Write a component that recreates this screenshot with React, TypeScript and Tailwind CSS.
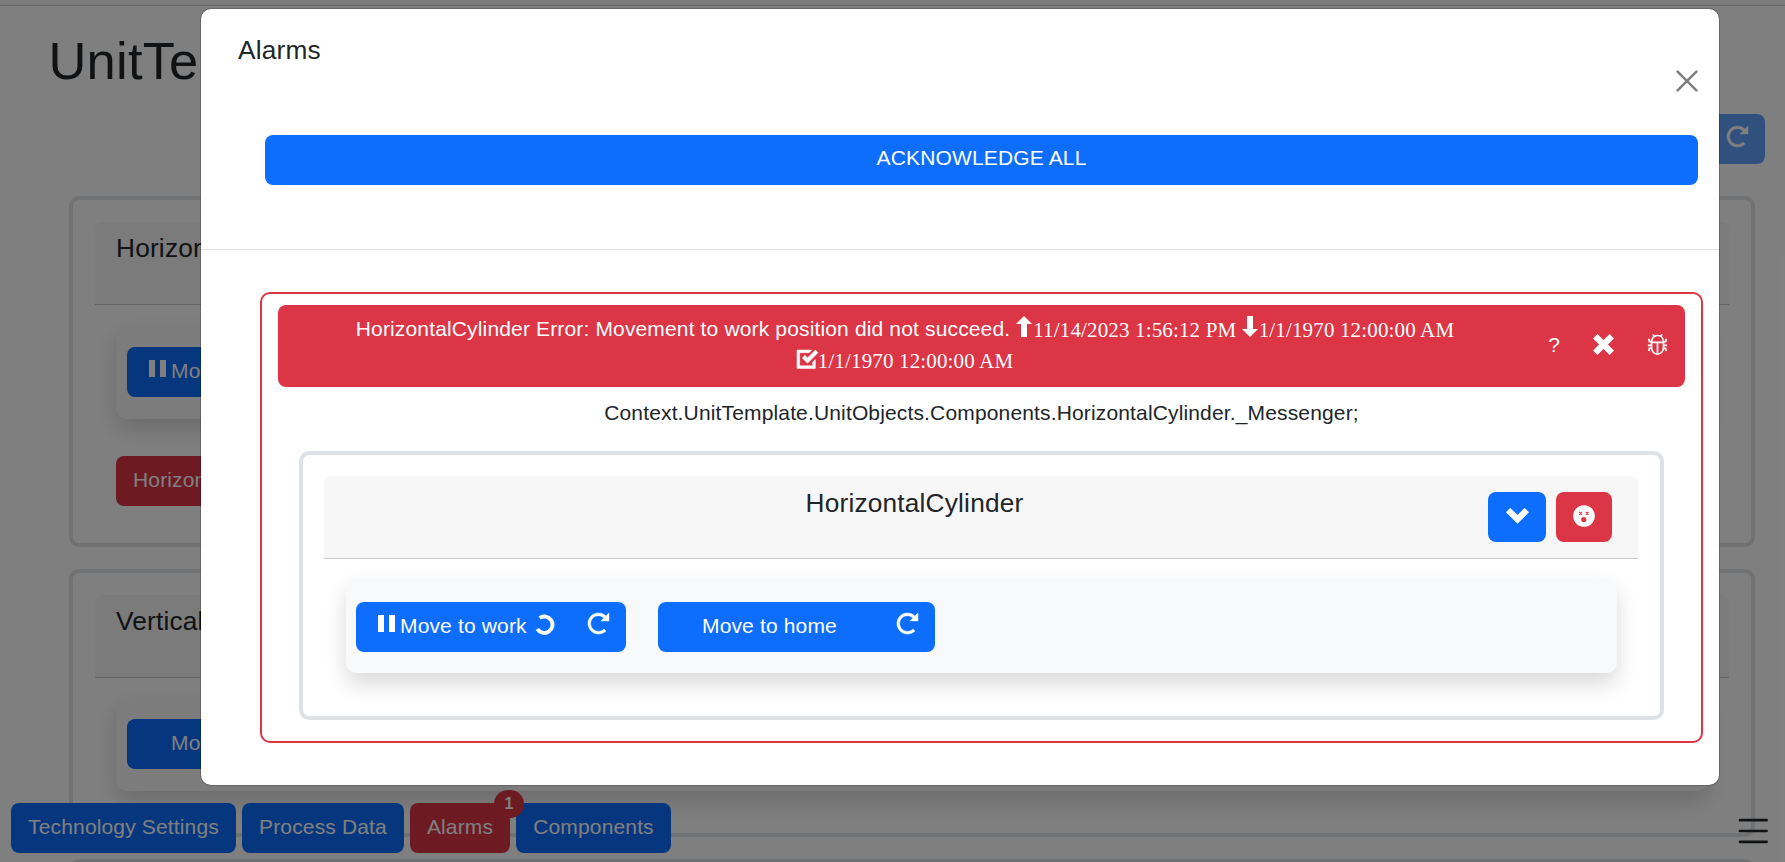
import type { ReactNode } from "react";

type IconProps = { className?: string };

/* Solid glyphs, drawn on an 8x8 grid */
function Glyph({ d, className = "", t, bold = 0 }: { d: string; className?: string; t?: string; bold?: number }) {
  return (
    <svg viewBox="0 0 8 8" fill="currentColor" stroke="currentColor" strokeWidth={bold} className={`inline-block h-[21px] w-[21px] shrink-0 overflow-visible ${className}`}>
      <path d={d} transform={t} />
    </svg>
  );
}
const Reload = ({ className }: IconProps) => (
  <Glyph
    className={className}
    bold={0.2}
    d="M4 0c-2.2 0-4 1.8-4 4s1.8 4 4 4c1.1 0 2.12-.43 2.84-1.16l-.72-.72c-.54.54-1.29.88-2.13.88-1.66 0-3-1.34-3-3s1.34-3 3-3c.83 0 1.55.36 2.09.91l-1.09 1.09h3v-3l-1.19 1.19c-.72-.72-1.71-1.19-2.81-1.19z"
  />
);
const Pause = () => (
  <svg viewBox="0 0 17 17" fill="currentColor" className="-mt-[5px] h-[17px] w-[17px] shrink-0">
    <path d="M0 0h6v17H0zM11 0h6v17h-6z" />
  </svg>
);
const Spin = ({ className }: IconProps) => (
  <svg viewBox="0 0 20 21" fill="none" stroke="currentColor" strokeWidth="3.900" className={`h-[21px] w-[20px] shrink-0 ${className}`}>
    <path d="M4.600 4A8.200 8.200 0 1 1 2.300 15" />
  </svg>
);
const Up = ({ className = "" }: IconProps) => (
  <svg viewBox="0 0 16 21" fill="currentColor" className={`h-[21px] w-[16px] shrink-0 ${className}`}>
    <path d="M8 0l8 8h-5v13H5V8H0z" />
  </svg>
);
const Down = ({ className = "" }: IconProps) => (
  <svg viewBox="0 0 16 21" fill="currentColor" className={`h-[21px] w-[16px] shrink-0 ${className}`}>
    <path d="M8 21l8-8h-5V0H5v13H0z" />
  </svg>
);
const Check = ({ className }: IconProps) => (
  <Glyph
    className={className}
    bold={0.2}
    d="M0 0v7h7v-3.410l-1 1v1.410h-5v-5h3.590l1-1h-5.590zm7 0l-3 3-1-1-1 1 2 2 4-4-1-1z"
    t="translate(0 .4)"
  />
);
const Cross = ({ className = "" }: IconProps) => (
  <svg viewBox="0 0 21 21" stroke="currentColor" strokeWidth="6.2" className={`h-[21px] w-[21px] shrink-0 ${className}`}>
    <path d="M2.200 2.200l16.600 16.600M18.800 2.200L2.200 18.800" />
  </svg>
);
const Chevron = ({ className }: IconProps) => (
  <Glyph className={className} d="M1.500 0l-1.500 1.500 4 4 4-4-1.500-1.500-2.500 2.500-2.500-2.500z" t="translate(0 1)" />
);
const Bug = () => (
  <svg viewBox="0 0 21 21" fill="none" stroke="currentColor" strokeWidth="1.700" className="h-[21px] w-[21px]">
    <path d="M4.500 8.300h12v5.500a6 6.300 0 0 1-12 0zM4.500 8.300c0-3.800 2.200-6.800 6-6.800s6 3 6 6.800M10.500 8.300V20M7.300 2.600 6 .3M13.700 2.600 15 .3M4.500 7.700H2.400L1.700 4.800M16.500 7.700h2.100l.7-2.900M4.500 11.300H.900M16.500 11.300h3.600M4.500 14.400H2.400L1.700 17M16.500 14.400h2.100l.7 2.600" />
  </svg>
);
const Dizzy = () => (
  <svg viewBox="0 0 22 22" className="h-[22px] w-[22px]">
    <circle cx="11" cy="11" r="10.800" fill="#fff" />
    <path d="M6.100 7l2.800 2.800M8.900 7 6.100 9.800M12.700 7l2.800 2.800M15.500 7l-2.800 2.800" stroke="#dc3545" strokeWidth="1.100" />
    <ellipse cx="10.800" cy="14.600" rx="2.600" ry="2.700" fill="#dc3545" />
  </svg>
);

function Btn({ children, className = "" }: { children?: ReactNode; className?: string }) {
  return <div className={`flex h-[50px] shrink-0 items-center rounded-[8px] pb-[2px] text-[21px] text-white ${className}`}>{children}</div>;
}

function Unit({ title, children, className = "" }: { title: string; children?: ReactNode; className?: string }) {
  return (
    <section className={`shrink-0 rounded-[10px] border-4 border-[#dee2e6] px-[22px] pt-[22px] ${className}`}>
      <header className="h-[83px] rounded-t-[7px] border-b border-[#cbcbcb] bg-[#f7f7f7] px-[21px] pt-[10px] text-[26.25px] leading-[32px] tracking-[0.19px]">
        {title}
      </header>
      {children}
    </section>
  );
}

function Tasks({ children, className = "" }: { children?: ReactNode; className?: string }) {
  return (
    <div className={`flex h-[94px] rounded-[10px] bg-[#f8f9fa] shadow-[0_10.5px_21px_rgba(0,0,0,0.15)] ${className}`}>{children}</div>
  );
}

function Page() {
  return (
    <div className="flex h-full flex-col">
      <div className="h-[6px] shrink-0 border-b border-[#d6d5d5] bg-[#f7f7f7]" />
      <h1 className="mt-[23px] h-[63px] shrink-0 pl-[48.5px] text-[52.5px] leading-[64px] tracking-[0.2px]">UnitTemplate</h1>
      <div className="mr-[20px] mt-[22px] flex shrink-0 justify-end">
        <Btn className="w-[120px] justify-end bg-[#0d6efd] pr-[17px] opacity-65">
          <Reload className="-mt-[4px]" />
        </Btn>
      </div>
      <main className="ml-[69px] mr-[30px] mt-[32px] flex flex-col gap-[22px]">
        <Unit title="HorizontalCylinder" className="h-[351px]">
          <Tasks className="mx-[21px] mt-[20px] pl-[11px] pt-[22px]">
            <Btn className="w-[270px] bg-[#0d6efd] pl-[22px]">
              <Pause />
              <span className="ml-[5px]">Move to work</span>
            </Btn>
          </Tasks>
          <Btn className="ml-[21px] mt-[37px] w-[300px] bg-[#dc3545] pl-[17px]">HorizontalCylinder</Btn>
        </Unit>
        <Unit title="VerticalCylinder" className="h-[268px]">
          <Tasks className="mx-[21px] mt-[19px] pl-[11px] pt-[22px]">
            <Btn className="w-[270px] bg-[#0d6efd] pl-[44px]">Move to work</Btn>
          </Tasks>
        </Unit>
        <Unit title="" className="h-[268px]" />
      </main>
    </div>
  );
}

function BottomBar() {
  return (
    <nav className="absolute bottom-[9px] left-[11px] right-[17px] flex items-center">
      <Btn className="w-[225px] justify-center bg-[#0d6efd]">Technology Settings</Btn>
      <Btn className="ml-[6px] w-[162px] justify-center bg-[#0d6efd]">Process Data</Btn>
      <Btn className="relative ml-[6px] w-[100px] justify-center bg-[#dc3545]">
        Alarms
        <span className="absolute left-[84px] top-[-13px] flex h-[28px] w-[30px] items-center justify-center rounded-full bg-[#dc3545] pb-[1px] text-[15.75px] font-bold leading-none">
          1
        </span>
      </Btn>
      <Btn className="ml-[6px] w-[155px] justify-center bg-[#0d6efd]">Components</Btn>
      <svg viewBox="0 0 30 26" stroke="#212529" strokeWidth="2.700" strokeLinecap="round" className="ml-auto mt-[5px] h-[26px] w-[30px]">
        <path d="M2 2.200h26.600M2 13h26.600M2 23.800h26.600" />
      </svg>
    </nav>
  );
}

function AlarmBanner() {
  return (
    <div className="flex h-[82px] rounded-[8px] bg-[#dc3545] text-[21px] text-white">
      <div className="ml-[62px] w-[1130px] shrink-0 pt-[8px] text-center leading-[32px]">
        <div className="flex h-[32px] items-center justify-center whitespace-pre">
          <span>HorizontalCylinder Error: Movement to work position did not succeed. </span>
          <Up className="-mt-[5px] mr-[1px]" />
          <span className="mt-[1px] font-[Liberation_Serif]">11/14/2023 1:56:12 PM </span>
          <Down className="-mt-[5px] mr-[1px]" />
          <span className="mt-[1px] font-[Liberation_Serif]">1/1/1970 12:00:00 AM</span>
        </div>
        <div className="-mt-[1px] flex h-[32px] items-center justify-center">
          <Check className="-mt-[1px]" />
          <span className="mt-[2px] font-[Liberation_Serif]">1/1/1970 12:00:00 AM</span>
        </div>
      </div>
      <div className="ml-auto mr-[17px] flex items-center pb-[3px]">
        <span>?</span>
        <Cross className="ml-[33px]" />
        <span className="ml-[33px]">
          <Bug />
        </span>
      </div>
    </div>
  );
}

function AlarmsDialog() {
  return (
    <div className="absolute left-[200px] top-[8px] flex h-[778px] w-[1520px] flex-col rounded-[11px] border border-[rgba(0,0,0,0.175)] bg-white bg-clip-padding">
      <div className="h-[241px] shrink-0 border-b border-[#dee2e6]">
        <div className="flex justify-between pl-[37px] pr-[21.5px] pt-[25px]">
          <h5 className="text-[26.25px] leading-[32px] tracking-[0.19px]">Alarms</h5>
          <svg viewBox="0 0 22 22" stroke="#808080" strokeWidth="2.600" strokeLinecap="round" className="mt-[36px] h-[22px] w-[22px]">
            <path d="M1.600 1.600l18.800 18.800M20.400 1.600L1.600 20.400" />
          </svg>
        </div>
        <Btn className="ml-[64px] mr-[21px] mt-[43px] justify-center bg-[#0d6efd]">
          <span className="-mt-[2px]">ACKNOWLEDGE ALL</span>
        </Btn>
      </div>
      <div className="ml-[59px] mr-[16px] mt-[42px] h-[451px] rounded-[10px] border-2 border-[#dc3545] px-[16px] pt-[11px]">
        <AlarmBanner />
        <p className="mt-[10px] text-center text-[21px] leading-[32px]">
          Context.UnitTemplate.UnitObjects.Components.HorizontalCylinder._Messenger;
        </p>
        <section className="mx-[21px] mt-[22px] h-[269px] rounded-[10px] border-4 border-[#dee2e6] pl-[21px] pr-[22px] pt-[21px]">
          <header className="flex h-[83px] rounded-t-[7px] border-b border-[#c9c9c9] bg-[#f7f7f7] pr-[26px]">
            <h5 className="ml-[22px] w-[1137px] shrink-0 pt-[11px] text-center text-[26.25px] leading-[32px] tracking-[0.19px]">
              HorizontalCylinder
            </h5>
            <Btn className="ml-auto mt-[16px] w-[58px] justify-center bg-[#0d6efd]">
              <Chevron className="h-[23px] w-[23px]" />
            </Btn>
            <Btn className="ml-[10px] mt-[16px] w-[56px] justify-center bg-[#dc3545]">
              <span className="-mt-[1px]">
                <Dizzy />
              </span>
            </Btn>
          </header>
          <Tasks className="ml-[22px] mr-[21px] mt-[20px] pl-[10px] pt-[23px]">
            <Btn className="w-[270px] bg-[#0d6efd] pl-[22px]">
              <Pause />
              <span className="ml-[5px]">Move to work</span>
              <Spin className="-mt-[3px] ml-[8px]" />
              <Reload className="-mt-[6px] ml-auto mr-[17px]" />
            </Btn>
            <Btn className="ml-[32px] w-[277px] bg-[#0d6efd] pl-[44px]">
              <span>Move to home</span>
              <Reload className="-mt-[6px] ml-auto mr-[17px]" />
            </Btn>
          </Tasks>
        </section>
      </div>
    </div>
  );
}

export default function App() {
  return (
    <div className="relative h-[862px] w-[1785px] overflow-hidden bg-white font-[Liberation_Sans,Arial,sans-serif] tracking-[0.15px] text-[#212529]">
      <Page />
      <BottomBar />
      <div className="absolute inset-0 bg-black/50" />
      <AlarmsDialog />
    </div>
  );
}
